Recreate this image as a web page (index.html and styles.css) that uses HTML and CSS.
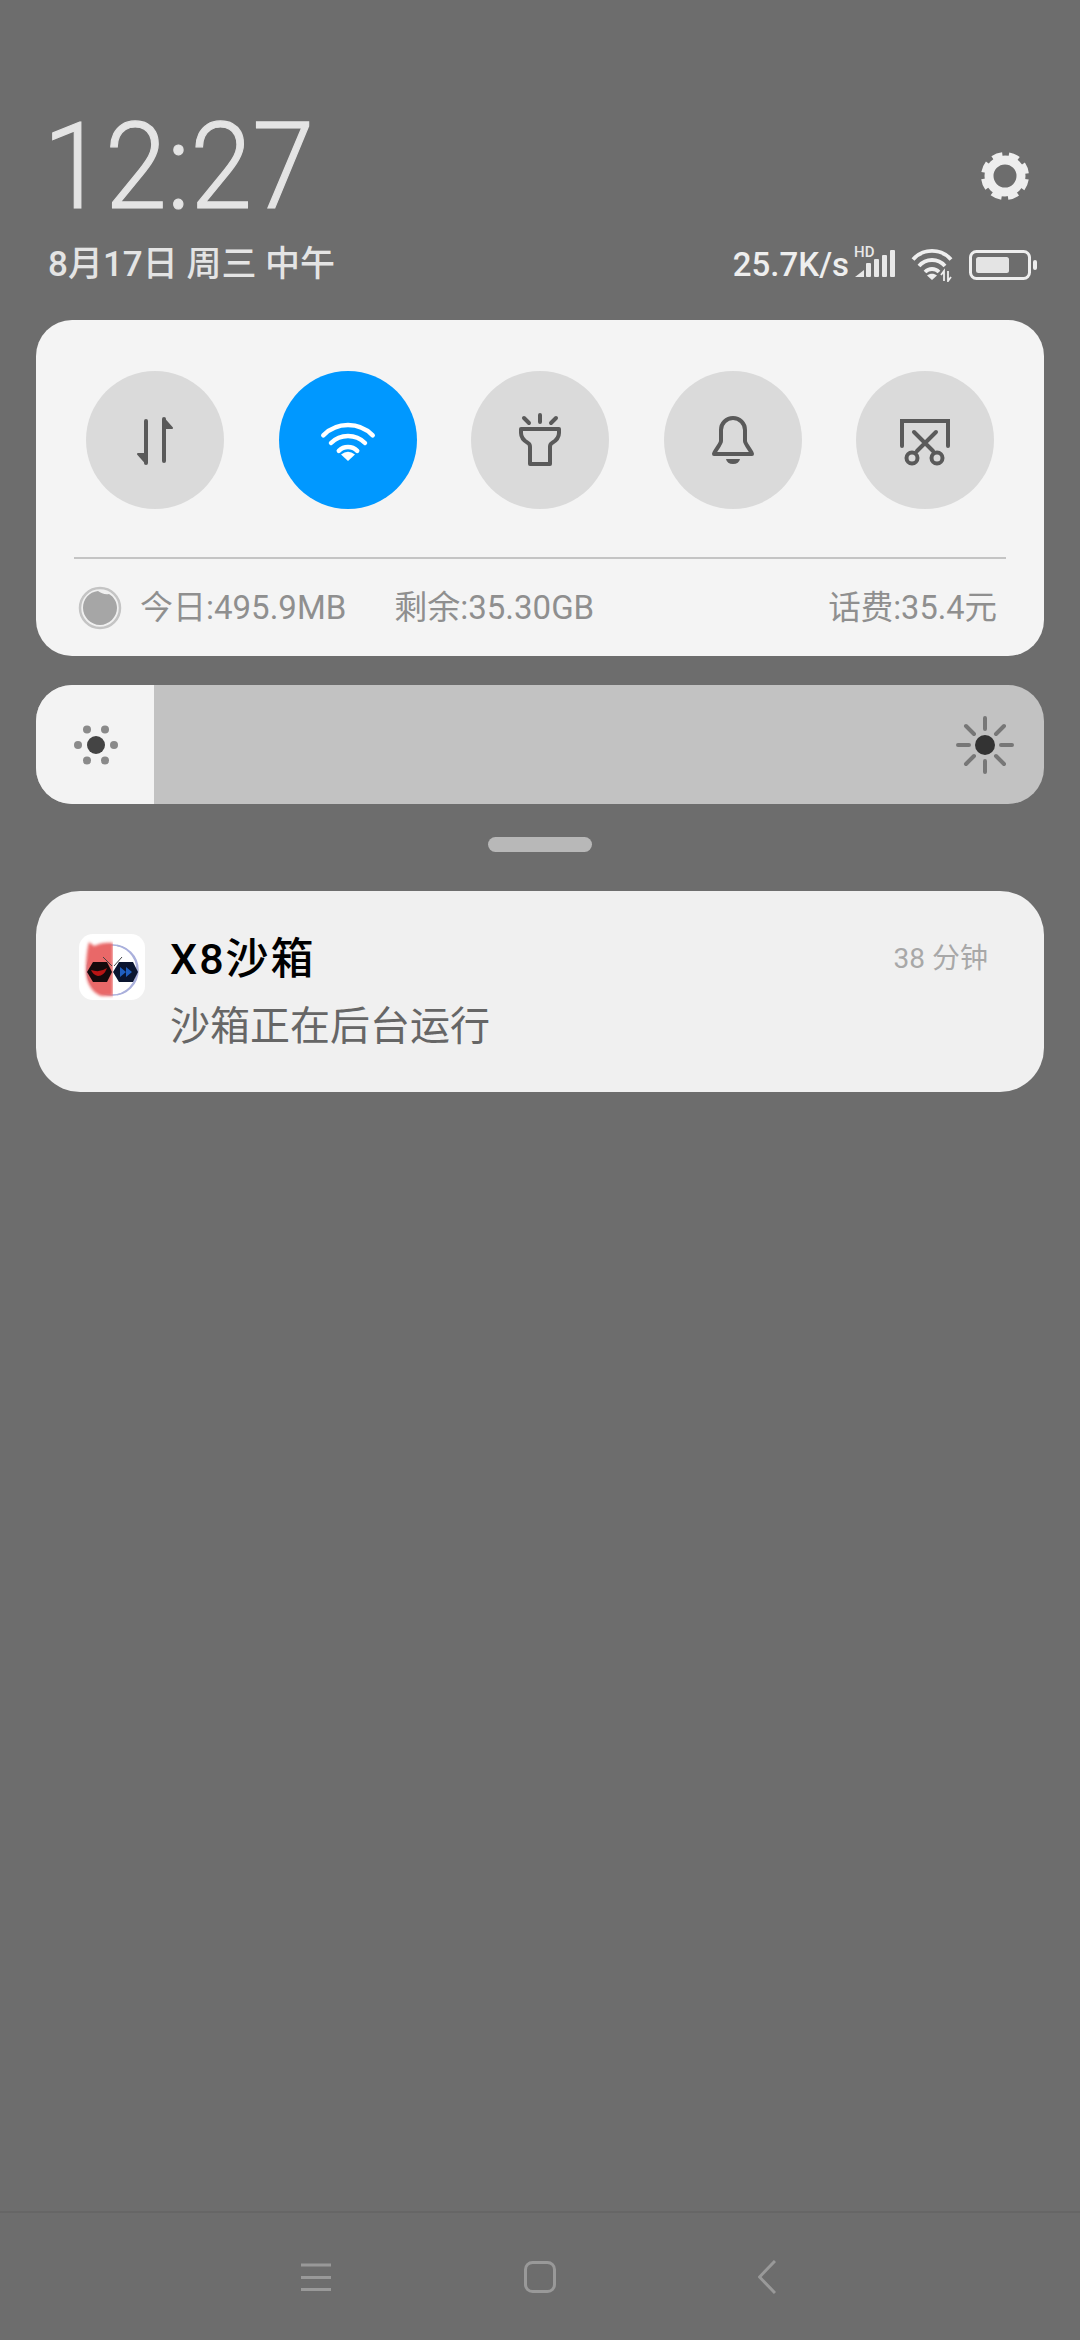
FILE: index.html
```html
<!DOCTYPE html>
<html lang="zh">
<head>
<meta charset="utf-8">
<title>Control center</title>
<link rel="stylesheet" href="styles.css">
</head>
<body>
<div class="page">
  <header class="header">
    <div class="clock-row">
      <div class="clock">12:27</div>
      <svg class="gear" width="48" height="48" viewBox="0 0 48 48">
        <circle cx="24" cy="24" r="16" fill="none" stroke="#eee" stroke-width="9"/>
        <circle cx="24" cy="24" r="21" fill="none" stroke="#eee" stroke-width="6" stroke-dasharray="10 6.49" stroke-dashoffset="-3.24"/>
      </svg>
    </div>
    <div class="status-row">
      <div class="date">8月17日 周三 中午</div>
      <div class="status">
        <span class="speed">25.7K/s</span>
        <span class="signal">
          <span class="hd">HD</span>
          <svg width="42" height="30" viewBox="0 0 42 30"><g fill="#e8e8e8"><path d="M1 27l9-7v7z"/><rect x="12" y="13" width="5" height="14" rx="1"/><rect x="20" y="9" width="5" height="18" rx="1"/><rect x="28" y="5" width="5" height="22" rx="1"/><rect x="36" y="0" width="5" height="27" rx="1"/></g></svg>
        </span>
        <svg class="wifi-s" width="42" height="34" viewBox="0 0 42 34"><g fill="none" stroke="#eee" stroke-width="3.800"><path d="M2 11.500C12 0 30 0 40 11.500"/><path d="M8 18C15 10 27 10 34 18"/><path d="M14 24C18 20 24 20 28 24"/></g><path d="M21 32l-5-4.500c3-2.500 7-2.500 10 0z" fill="#eee"/><path d="M33 33V23l-3 4M37 23v10l3-4" fill="none" stroke="#eee" stroke-width="1.800"/></svg>
        <svg class="battery" width="68" height="30" viewBox="0 0 68 30"><rect x="1.500" y="1.500" width="59" height="27" rx="6" fill="none" stroke="#eee" stroke-width="3"/><rect x="7" y="7" width="33" height="16" rx="2.500" fill="#e4e4e4"/><rect x="64" y="10" width="4" height="10" rx="2" fill="#eee"/></svg>
      </div>
    </div>
  </header>

  <section class="card toggles">
    <div class="toggle-row">
      <div class="toggle">
        <svg width="138" height="138" viewBox="0 0 138 138"><g fill="#5a5a5a" stroke="#5a5a5a" stroke-width="4" stroke-linejoin="round" stroke-linecap="round"><path d="M60 50v42"/><path d="M60 92l-8-9 8 0z" stroke-width="2"/><path d="M78 90V48"/><path d="M78 48l8 9-8 0z" stroke-width="2"/></g></svg>
      </div>
      <div class="toggle on">
        <svg width="138" height="138" viewBox="0 0 138 138"><g fill="none" stroke="#fff" stroke-width="4.500" stroke-linecap="round"><path d="M44.300 64.300A35 35 0 0 1 93.700 64.300"/><path d="M52 72A24 24 0 0 1 86 72"/><path d="M59.800 79.800A13 13 0 0 1 78.200 79.800"/></g><path d="M69 90l-7-6.500q7-5.500 14 0z" fill="#fff"/></svg>
      </div>
      <div class="toggle">
        <svg width="138" height="138" viewBox="0 0 138 138"><g fill="none" stroke="#5a5a5a" stroke-width="4" stroke-linecap="round" stroke-linejoin="round"><path d="M69 44v7M53 47l5 5M85 47l-5 5"/><path d="M50 58h38v4q0 6-7 10-2 1-2 4v17H59V76q0-3-2-4-7-4-7-10z"/></g></svg>
      </div>
      <div class="toggle">
        <svg width="138" height="138" viewBox="0 0 138 138"><g fill="none" stroke="#5a5a5a" stroke-width="4" stroke-linecap="round" stroke-linejoin="round"><path d="M50 83h38c0-2-7-10-7-13V59a12 12 0 0 0-24 0v11c0 3-7 11-7 13z"/></g><path d="M62 88h14q-1 5-7 5t-7-5z" fill="#5a5a5a"/></svg>
      </div>
      <div class="toggle">
        <svg width="138" height="138" viewBox="0 0 138 138"><g fill="none" stroke="#5a5a5a" stroke-width="4" stroke-linecap="round"><path d="M46 75V50h46v25"/><path d="M58 61l19 19M80 61L61 80"/><circle cx="56" cy="87" r="5.500"/><circle cx="81" cy="87" r="5.500"/></g></svg>
      </div>
    </div>
    <div class="stats">
      <svg class="orb" width="44" height="44" viewBox="0 0 44 44"><circle cx="22" cy="22" r="20" fill="#f0f0f0" stroke="#c4c4c4" stroke-width="2.500"/><path d="M5 22C5 13 11 6 20 5c3 2 7 4 11 3 5 3 8 8 8 14 0 9-8 17-17 17S5 31 5 22z" fill="#a6a6a6"/></svg>
      <span class="stat today">今日:495.9MB</span>
      <span class="stat left">剩余:35.30GB</span>
      <span class="stat fee">话费:35.4元</span>
    </div>
  </section>

  <section class="slider">
    <div class="slider-fill">
      <svg width="48" height="48" viewBox="0 0 48 48"><circle cx="24" cy="24" r="9" fill="#444"/><g fill="#8a8a8a"><circle cx="6" cy="24" r="4"/><circle cx="42" cy="24" r="4"/><circle cx="15" cy="8.500" r="4"/><circle cx="33" cy="8.500" r="4"/><circle cx="15" cy="39.500" r="4"/><circle cx="33" cy="39.500" r="4"/></g></svg>
    </div>
    <svg class="sun" width="58" height="58" viewBox="0 0 58 58"><circle cx="29" cy="29" r="10" fill="#333"/><g stroke="#777" stroke-width="4" stroke-linecap="round"><path d="M29 2v11M29 45v11M2 29h11M45 29h11M10 10l8 8M40 40l8 8M48 10l-8 8M18 40l-8 8"/></g></svg>
  </section>

  <div class="handle"></div>

  <section class="notice">
    <svg class="app-icon" width="66" height="66" viewBox="0 0 66 66">
      <defs><filter id="soft" x="-20%" y="-20%" width="140%" height="140%"><feGaussianBlur stdDeviation="1.400"/></filter></defs>
      <rect width="66" height="66" rx="14" fill="#fff"/>
      <circle cx="33" cy="36" r="25" fill="none" stroke="#aab0dc" stroke-width="1.500"/>
      <path d="M34 62H22C12 58 7 48 7 36c0-9 1-21 3-28l5 4c6-3 12-4 19-3z" fill="#e96868" filter="url(#soft)"/>
      <rect x="34" y="5" width="4" height="60" fill="#fff"/>
      <path d="M34 11A25 25 0 0 1 34 61" fill="none" stroke="#aab0dc" stroke-width="1.500"/>
      <path d="M24 23l9 9M43 23l-8 9" stroke="#444" stroke-width="1"/>
      <path d="M14 28h14l5 10-5 10H14L8 38z" fill="#14090c"/>
      <path d="M12 36q9 3 16-2-3 8-9 8-5-1-7-6z" fill="#b81414"/>
      <path d="M40 28h14l5 10-5 10H40l-6-10z" fill="#0a1530"/>
      <path d="M41 33l6 5-6 5zM47 33l6 5-6 5z" fill="#1f5fc0"/>
    </svg>
    <div class="notice-body">
      <div class="notice-head">
        <span class="notice-title">X8沙箱</span>
        <span class="notice-time">38 分钟</span>
      </div>
      <div class="notice-text">沙箱正在后台运行</div>
    </div>
  </section>

  <nav class="navbar">
    <svg width="30" height="28" viewBox="0 0 30 28"><g stroke="#999" stroke-width="3"><path d="M0 2h30M0 14.500h30M0 26.500h30"/></g></svg>
    <svg class="nav-home" width="32" height="32" viewBox="0 0 32 32"><rect x="1.500" y="1.500" width="29" height="29" rx="7" fill="none" stroke="#999" stroke-width="3"/></svg>
    <svg width="18" height="34" viewBox="0 0 18 34"><path d="M17 1L1.500 17 17 33" fill="none" stroke="#999" stroke-width="3"/></svg>
  </nav>
</div>
</body>
</html>
```

FILE: styles.css
```css
* { box-sizing: border-box; }

html, body { margin: 0; padding: 0; }

body {
  width: 1080px;
  height: 2340px;
  background: #6d6d6d;
  font-family: "Roboto", "Noto Sans CJK SC", sans-serif;
  overflow: hidden;
}

.page {
  width: 1080px;
  height: 2340px;
  display: flex;
  flex-direction: column;
}

.header { padding: 105px 44px 0 48px; height: 320px; }

.clock-row {
  display: flex;
  justify-content: space-between;
  align-items: center;
  height: 124px;
}

.clock {
  font-size: 120px;
  line-height: 124px;
  font-weight: 300;
  color: #e4e4e4;
  -webkit-text-stroke: 1.200px #e4e4e4;
  transform: scaleX(0.93);
  transform-origin: left center;
  margin-left: -5px;
}

.gear { margin: 18px 7px 0 0; }

.status-row {
  display: flex;
  justify-content: space-between;
  align-items: center;
  margin-top: 14px;
  height: 44px;
}

.date {
  font-size: 35px;
  line-height: 44px;
  font-weight: 500;
  color: #e4e4e4;
}

.status { display: flex; align-items: center; margin-right: -1px; }

.speed {
  font-size: 33px;
  font-weight: 500;
  color: #eee;
  line-height: 40px;
}

.signal {
  display: block;
  position: relative;
  width: 42px;
  height: 30px;
  margin-left: 5px;
}

.signal svg { display: block; }

.hd {
  position: absolute;
  left: 0;
  top: -5px;
  font-size: 15px;
  line-height: 15px;
  font-weight: 500;
  color: #e8e8e8;
}

.wifi-s { margin-left: 15px; }

.battery { margin-left: 16px; }

.card {
  margin: 0 36px;
  height: 336px;
  background: #f4f4f4;
  border-radius: 36px;
}

.toggles { padding: 51px 50px 0; }

.toggle-row { display: flex; justify-content: space-between; }

.toggle {
  width: 138px;
  height: 138px;
  border-radius: 50%;
  background: #dadada;
}

.toggle svg { display: block; }

.toggle.on { background: #0098ff; }

.stats {
  margin: 48px -12px 0;
  border-top: 2px solid #c4c4c4;
  display: flex;
  align-items: center;
  height: 99px;
  padding: 0 9px 0 4px;
}

.stat {
  font-size: 33px;
  line-height: 40px;
  color: #8f8f8f;
}

.orb { flex: none; }

.today { margin-left: 18px; }

.left { margin-left: 48px; }

.fee { margin-left: auto; font-size: 32.500px; }

.slider {
  margin: 29px 36px 0;
  height: 119px;
  border-radius: 36px;
  background: #c2c2c2;
  display: flex;
  align-items: center;
  justify-content: space-between;
  overflow: hidden;
  padding-right: 30px;
}

.slider-fill {
  width: 118px;
  height: 100%;
  background: #f3f3f3;
  display: flex;
  align-items: center;
  padding-left: 36px;
}

.handle {
  width: 104px;
  height: 15px;
  border-radius: 8px;
  background: #b8b8b8;
  margin: 33px auto 0;
}

.notice {
  margin: 39px 36px 0;
  height: 201px;
  border-radius: 44px;
  background: #f0f0f0;
  padding: 43px 56px 0 43px;
  display: flex;
  align-items: flex-start;
}

.app-icon { flex: none; }

.notice-body { flex: 1; margin-left: 25px; }

.notice-head {
  display: flex;
  justify-content: space-between;
  align-items: center;
  height: 44px;
  margin-top: 3px;
}

.notice-title {
  font-size: 43px;
  line-height: 44px;
  font-weight: 500;
  letter-spacing: 2px;
  color: #000;
}

.notice-time {
  font-size: 28px;
  line-height: 36px;
  color: #a8a8a8;
}

.notice-text {
  margin-top: 24px;
  font-size: 40px;
  line-height: 44px;
  color: #666;
}

.navbar {
  margin-top: auto;
  height: 129px;
  border-top: 2px solid #666;
  display: flex;
  align-items: center;
  padding: 0 304px 0 301px;
  justify-content: space-between;
}

.nav-home { margin-right: 9px; }
```
